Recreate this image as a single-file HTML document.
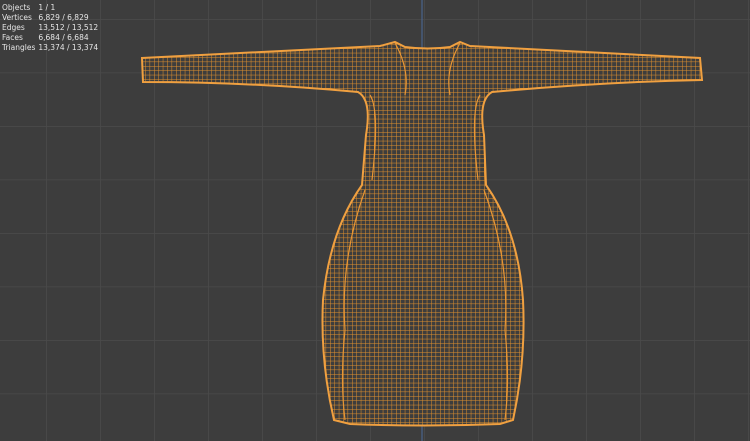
<!DOCTYPE html>
<html><head><style>
html,body{margin:0;padding:0;width:750px;height:441px;overflow:hidden;background:#3d3d3d}
.stats{position:absolute;left:2px;top:3px;font:7.5px "DejaVu Sans","Liberation Sans",sans-serif;color:#e6e6e6;line-height:10px}
.stats div span{display:inline-block;width:34px}
</style></head><body>
<svg width="750" height="441" style="position:absolute;left:0;top:0">
<defs>
<pattern id="g" width="54" height="53.5" patternUnits="userSpaceOnUse" x="46" y="19">
<path d="M0 0V53.5M0 0H54" stroke="#4b4b4b" stroke-width="1.5" fill="none"/>
</pattern>
<pattern id="w" width="4.4" height="4.4" patternUnits="userSpaceOnUse">
<path d="M0 0V4.4M0 0H4.4" stroke="#e0902e" stroke-width="1" fill="none"/>
</pattern>
<clipPath id="c"><path id="d" d="M142,58 Q260,52 380,46 L395,42 L405,47 Q428,50 450,47 L460,42 L470,46 Q590,52 700,58 L702,80 Q600,82 492,92 Q478,100 484,135 L486,185 Q518,230 523,300 Q526,360 513,420 L500,424 Q425,427 350,424 L334,420 Q320,360 323,300 Q330,230 362,185 L366,135 Q372,100 358,92 Q250,82 143,82 Z"/></clipPath>
</defs>
<rect width="750" height="441" fill="url(#g)"/>
<line x1="422" y1="0" x2="422" y2="441" stroke="#4a6a9a" stroke-width="1"/>
<g clip-path="url(#c)">
<rect x="0" y="0" width="750" height="441" fill="#3d3d3d"/>
<rect x="0" y="0" width="750" height="441" fill="url(#w)"/>
</g>
<use href="#d" fill="none" stroke="#f0a040" stroke-width="2"/>
<path d="M365,190 Q340,260 345,330 Q340,380 345,420 M484,190 Q510,260 505,330 Q510,380 505,420 M370,95 Q380,110 372,180 M480,95 Q470,110 478,180 M395,43 Q410,70 405,95 M460,43 Q445,70 450,95" stroke="#e89634" stroke-width="1.2" fill="none"/>
</svg>
<div class="stats">
<div><span>Objects</span> 1 / 1</div>
<div><span>Vertices</span> 6,829 / 6,829</div>
<div><span>Edges</span> 13,512 / 13,512</div>
<div><span>Faces</span> 6,684 / 6,684</div>
<div><span>Triangles</span> 13,374 / 13,374</div>
</div>
</body></html>
